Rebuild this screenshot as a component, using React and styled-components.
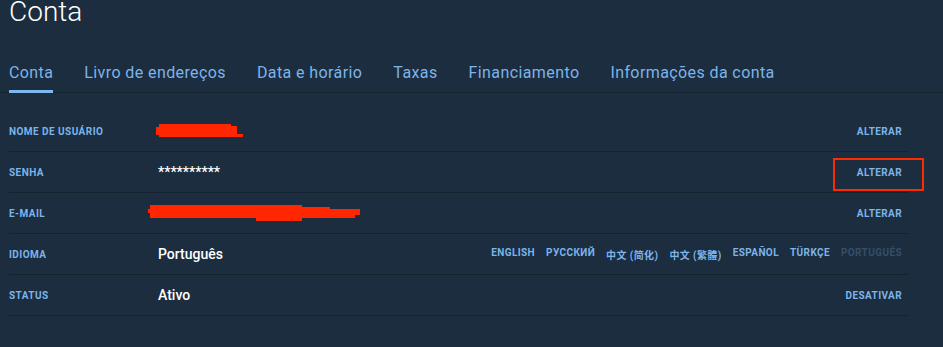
import React from 'react';
import styled, { createGlobalStyle } from 'styled-components';

const GlobalStyle = createGlobalStyle`
    html, body {
        margin: 0;
        padding: 0;
        background: #1b2d3e;
    }
    body {
        font-family: Roboto, "Noto Sans CJK SC", "Liberation Sans", sans-serif;
        -webkit-font-smoothing: antialiased;
    }
`

const Page = styled.div`
    width: 943px;
    height: 347px;
    overflow: hidden;
    background: #1b2d3e;
    position: relative;
`

const Title = styled.h1`
    margin: -4px 0 0 9px;
    font-size: 28px;
    line-height: 32px;
    font-weight: 300;
    color: #ffffff;
`

const Tabs = styled.nav`
    display: flex;
    gap: 31px;
    margin-top: 35px;
    padding-left: 9px;
    border-bottom: 1px solid #15232f;
`

const Tab = styled.a`
    display: block;
    font-size: 16px;
    line-height: 20px;
    letter-spacing: 0.4px;
    color: #7db4ea;
    padding-bottom: 7px;
    border-bottom: 3px solid ${props => props.active ? '#7fb6ee' : 'transparent'};
    margin-bottom: -1px;
    white-space: nowrap;
    cursor: pointer;
`

const Rows = styled.div`
    margin: 18px 35px 0 9px;
`

const Row = styled.div`
    position: relative;
    display: flex;
    align-items: center;
    height: 40px;
    border-bottom: 1px solid #15232f;
    padding-right: 6px;
`

const Label = styled.div`
    width: 149px;
    flex-shrink: 0;
    font-size: 10px;
    font-weight: 700;
    letter-spacing: 0.45px;
    text-transform: uppercase;
    color: #7db4ea;
`

const Value = styled.div`
    position: relative;
    flex: 1;
    font-size: 14px;
    font-weight: 500;
    color: #ffffff;
`

const Actions = styled.div`
    display: flex;
    gap: 11px;
`

const Action = styled.a`
    font-size: 10px;
    font-weight: 700;
    letter-spacing: 0.4px;
    text-transform: uppercase;
    white-space: nowrap;
    color: ${props => props.disabled ? '#364f68' : '#7db4ea'};
    cursor: ${props => props.disabled ? 'default' : 'pointer'};
`

const Redaction = styled.svg`
    position: absolute;
    left: -10px;
    top: 50%;
    transform: translateY(-50%);
    overflow: visible;
`

const Highlight = styled.div`
    position: absolute;
    left: 824px;
    top: 6px;
    width: 91px;
    height: 33px;
    box-sizing: border-box;
    border: 2.5px solid #ff2a00;
`

const RED = '#ff2600';

const UserScribble = () => (
    <Redaction width="100" height="20" viewBox="0 0 100 20">
        <rect x="11" y="3" width="72" height="11" fill={RED} />
        <rect x="80" y="5" width="9" height="8" fill={RED} />
        <rect x="11" y="13" width="84" height="3" fill={RED} />
        <rect x="8" y="6" width="4" height="8" fill={RED} />
    </Redaction>
)

const MailScribble = () => (
    <Redaction width="230" height="20" viewBox="0 0 230 20">
        <rect x="2" y="2" width="152" height="13" fill={RED} />
        <rect x="0" y="6" width="4" height="4" fill={RED} />
        <rect x="150" y="4" width="32" height="11" fill={RED} />
        <rect x="180" y="6" width="32" height="6" fill={RED} />
        <rect x="9" y="10" width="198" height="5" fill={RED} />
        <rect x="108" y="14" width="46" height="4" fill={RED} />
    </Redaction>
)

const tabs = ['Conta', 'Livro de endereços', 'Data e horário', 'Taxas', 'Financiamento', 'Informações da conta'];

const languages = ['English', 'Русский', '中文 (简化)', '中文 (繁體)', 'Español', 'Türkçe', 'Português'];

const App = () => (
    <Page>
        <GlobalStyle />
        <Title>Conta</Title>
        <Tabs>
            {tabs.map((t, i) => <Tab key={t} active={i === 0}>{t}</Tab>)}
        </Tabs>
        <Rows>
            <Row>
                <Label>Nome de usuário</Label>
                <Value><UserScribble /></Value>
                <Action>Alterar</Action>
            </Row>
            <Row>
                <Label>Senha</Label>
                <Value>**********</Value>
                <Action>Alterar</Action>
                <Highlight />
            </Row>
            <Row>
                <Label>E-mail</Label>
                <Value><MailScribble /></Value>
                <Action>Alterar</Action>
            </Row>
            <Row>
                <Label>Idioma</Label>
                <Value>Português</Value>
                <Actions>
                    {languages.map(l => <Action key={l} disabled={l === 'Português'}>{l}</Action>)}
                </Actions>
            </Row>
            <Row>
                <Label>Status</Label>
                <Value>Ativo</Value>
                <Action>Desativar</Action>
            </Row>
        </Rows>
    </Page>
);

export default App;
